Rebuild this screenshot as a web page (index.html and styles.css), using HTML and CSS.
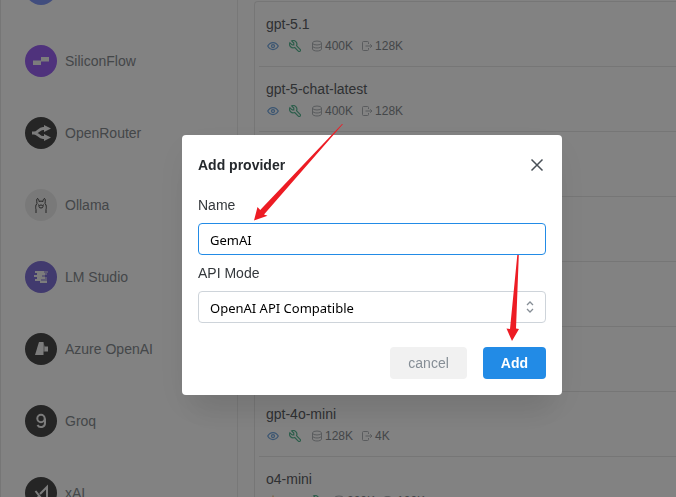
FILE: index.html
```
<!DOCTYPE html>
<html lang="en">
  <head>
    <meta charset="UTF-8" />
    <meta name="viewport" content="width=device-width, initial-scale=1.0" />
    <title>Providers</title>
    <link rel="stylesheet" href="styles.css">
  </head>
  <body>
    <!-- Shared icons -->
    <svg class="sprite" aria-hidden="true">
      <symbol id="icon-eye" viewBox="0 0 24 24">
        <path d="M1.500 12C4 7.300 7.500 5 12 5s8 2.300 10.500 7C20 16.700 16.500 19 12 19S4 16.700 1.500 12z" />
        <circle cx="12" cy="12" r="3" />
      </symbol>
      <symbol id="icon-tool" viewBox="2 2 20 20">
        <path d="M7 10h3V7L6.500 3.500a6 6 0 0 1 8 8l6 6a2 2 0 0 1-3 3l-6-6a6 6 0 0 1-8-8L7 10" />
      </symbol>
      <symbol id="icon-context" viewBox="0 0 24 24">
        <ellipse cx="12" cy="6" rx="9" ry="4" />
        <path d="M3 6v12c0 2.200 4 4 9 4s9-1.800 9-4V6M3 12c0 2.200 4 4 9 4s9-1.800 9-4" />
      </symbol>
      <symbol id="icon-output" viewBox="0 0 24 24">
        <path d="M15 8V5a2 2 0 0 0-2-2H5a2 2 0 0 0-2 2v14a2 2 0 0 0 2 2h8a2 2 0 0 0 2-2v-3M9 12h13M18.500 8.500L22 12l-3.500 3.500" />
      </symbol>
      <symbol id="icon-reason" viewBox="0 0 24 24">
        <path d="M12 1v3M3.500 5l2 2M20.500 5l-2 2M1 13h2M21 13h2M9 17a6 6 0 1 1 6 0v3H9z" />
      </symbol>
    </svg>

    <div class="app">
      <nav class="sidebar">
        <a class="provider" href="#" aria-label="DeepSeek">
          <span class="avatar avatar-blue"></span>
        </a>
        <a class="provider" href="#">
          <span class="avatar avatar-purple">
            <svg viewBox="0 0 32 32"><path d="M16 12h8v4.500h-8V20H8v-4.500h8z" /></svg>
          </span>
          SiliconFlow
        </a>
        <a class="provider" href="#">
          <span class="avatar">
            <svg viewBox="0 0 32 32">
              <path class="line heavy" d="M7 16h2c4 0 5-4.500 9-4.500h2M9 16c4 0 5 4.500 9 4.500h2" />
              <path d="M19 8l7 3.500-7 3.500zM19 17l7 3.500-7 3.500z" />
            </svg>
          </span>
          OpenRouter
        </a>
        <a class="provider" href="#">
          <span class="avatar avatar-light">
            <svg viewBox="0 0 32 32">
              <path class="line" d="M11 24v-3.500c-.4-1-.4-3 0-4.500l1-1.500c-.5-2.500-.3-5 .5-5s1.500 1.500 1.500 3c1-.5 3-.5 4 0 0-1.500.7-3 1.500-3s1 2.500.5 5l1 1.500c.4 1.500.4 3.500 0 4.500V24M13.500 15.500v1M18.500 15.500v1" />
              <ellipse class="line" cx="16" cy="17.500" rx="2" ry="1.500" />
            </svg>
          </span>
          Ollama
        </a>
        <a class="provider" href="#">
          <span class="avatar avatar-indigo">
            <svg viewBox="0 0 32 32">
              <path d="M10 10h9v2h-9zM12 12h8v2h-8zM9 14h8v2H9zM12 16h8v2h-8zM10 18h6v2h-6zM15 20h7v2h-7z" />
              <path class="faint" d="M19 10h4v2h-4zM20 12h2v2h-2zM17 14h3v2h-3zM20 16h2v2h-2zM16 18h6v2h-6z" />
            </svg>
          </span>
          LM Studio
        </a>
        <a class="provider" href="#">
          <span class="avatar">
            <svg viewBox="0 0 32 32">
              <path d="M14 9h4.500v13H10z" />
              <path d="M19.500 13.500H23v5h-3.500z" />
              <path class="faint" d="M18 9l2 4.500v5H18z" />
            </svg>
          </span>
          Azure OpenAI
        </a>
        <a class="provider" href="#">
          <span class="avatar">
            <svg viewBox="0 0 32 32">
              <path class="line" d="M20 13.500V18a4 4 0 0 1-7.500 2" />
              <circle class="line" cx="16" cy="13.500" r="3.700" />
            </svg>
          </span>
          Groq
        </a>
        <a class="provider" href="#">
          <span class="avatar">
            <svg viewBox="0 0 32 32">
              <path class="line" d="M10.500 14l7 9M11 23l3-4M15 17l7-7v13" />
            </svg>
          </span>
          xAI
        </a>
      </nav>

      <main class="content">
        <ul class="models">
          <li class="model">
            <span class="model-name">gpt-5.1</span>
            <span class="model-meta">
              <svg class="icon eye"><use href="#icon-eye" /></svg>
              <svg class="icon tool"><use href="#icon-tool" /></svg>
              <span class="limit"><svg class="icon"><use href="#icon-context" /></svg>400K</span>
              <span class="limit"><svg class="icon"><use href="#icon-output" /></svg>128K</span>
            </span>
          </li>
          <li class="model">
            <span class="model-name">gpt-5-chat-latest</span>
            <span class="model-meta">
              <svg class="icon eye"><use href="#icon-eye" /></svg>
              <svg class="icon tool"><use href="#icon-tool" /></svg>
              <span class="limit"><svg class="icon"><use href="#icon-context" /></svg>400K</span>
              <span class="limit"><svg class="icon"><use href="#icon-output" /></svg>128K</span>
            </span>
          </li>
          <li class="model"></li>
          <li class="model"></li>
          <li class="model"></li>
          <li class="model"></li>
          <li class="model">
            <span class="model-name">gpt-4o-mini</span>
            <span class="model-meta">
              <svg class="icon eye"><use href="#icon-eye" /></svg>
              <svg class="icon tool"><use href="#icon-tool" /></svg>
              <span class="limit"><svg class="icon"><use href="#icon-context" /></svg>128K</span>
              <span class="limit"><svg class="icon"><use href="#icon-output" /></svg>4K</span>
            </span>
          </li>
          <li class="model">
            <span class="model-name">o4-mini</span>
            <span class="model-meta">
              <svg class="icon reason"><use href="#icon-reason" /></svg>
              <svg class="icon eye"><use href="#icon-eye" /></svg>
              <svg class="icon tool"><use href="#icon-tool" /></svg>
              <span class="limit"><svg class="icon"><use href="#icon-context" /></svg>200K</span>
              <span class="limit"><svg class="icon"><use href="#icon-output" /></svg>100K</span>
            </span>
          </li>
        </ul>
      </main>
    </div>

    <div class="overlay">
      <form class="modal" role="dialog" aria-labelledby="modal-title">
        <header class="modal-header">
          <h2 id="modal-title">Add provider</h2>
          <button type="button" class="close" aria-label="Close">
            <svg viewBox="0 0 14 14"><path d="M1.500 1.500l11 11M12.500 1.500l-11 11" /></svg>
          </button>
        </header>

        <div class="form-group">
          <label for="name">Name</label>
          <input class="field active" type="text" id="name" value="GemAI" />
        </div>

        <div class="form-group">
          <label for="mode">API Mode</label>
          <div class="select-wrap">
            <select class="field" id="mode">
              <option>OpenAI API Compatible</option>
            </select>
            <svg class="chevrons" viewBox="0 0 8 12"><path d="M1 4l3-3 3 3M1 8l3 3 3-3" /></svg>
          </div>
        </div>

        <footer class="actions">
          <button type="button" class="btn btn-cancel">cancel</button>
          <button type="button" class="btn btn-add">Add</button>
        </footer>

        <svg class="arrows" viewBox="0 0 380 260" aria-hidden="true">
          <path d="M161-11L82 79.500l3.500 1.200L72 85.500l3.500-13.500 2.700 3L160-11z" />
          <path d="M335.300 120h1.500l-2.800 73.500 3 .5-7 12-5.500-12.500 3.500.5z" />
        </svg>
      </form>
    </div>
  </body>
</html>
```

FILE: styles.css
```
* {
  box-sizing: border-box;
}
body {
  background-color: #fff;
  color: #5c6064;
  font-family: "Liberation Sans", Arial, sans-serif;
  font-size: 14px;
  height: 100vh;
  margin: 0;
  overflow: hidden;
}
.sprite {
  display: none;
}
.app {
  border-left: 1px solid #e8e8e8;
  display: flex;
  height: 100vh;
  overflow: hidden;
}
.sidebar {
  border-right: 1px solid #ececec;
  display: flex;
  flex: 0 0 237px;
  flex-direction: column;
  justify-content: flex-end;
  margin-bottom: -32px;
  padding-left: 24px;
}
.provider {
  align-items: center;
  color: #868b90;
  display: flex;
  flex: 0 0 72px;
  gap: 8px;
  text-decoration: none;
}
.avatar {
  background-color: #4a4a4a;
  border-radius: 50%;
  color: #f4f4f4;
  height: 32px;
  width: 32px;
}
.avatar-blue {
  background-color: #8098f8;
}
.avatar-purple {
  background-color: #9b62f4;
}
.avatar-indigo {
  background-color: #8072d8;
}
.avatar-light {
  background-color: #eee;
  color: #484848;
}
.avatar svg {
  display: block;
  fill: currentColor;
}
.avatar .line {
  fill: none;
  stroke: currentColor;
  stroke-width: 2;
}
.avatar .heavy {
  stroke-width: 3;
}
.avatar-light .line {
  stroke-width: 1;
}
.avatar .faint {
  opacity: 0.5;
}
.content {
  flex: 1;
  padding: 1px 0 0 16px;
}
.models {
  border: 1px solid #e8e8e8;
  border-right: none;
  border-radius: 4px 0 0 0;
  list-style: none;
  margin: 0;
  padding: 0 0 0 4px;
}
.model {
  border-bottom: 1px solid #e8e8e8;
  display: flex;
  flex-direction: column;
  gap: 5px;
  height: 65px;
  padding: 12px 7px 0;
}
.model-name {
  line-height: 20px;
}
.model-meta {
  align-items: center;
  color: #868b90;
  display: flex;
  font-size: 12px;
  gap: 8px;
  line-height: 14px;
  padding-left: 1px;
}
.icon {
  fill: none;
  height: 12px;
  stroke: currentColor;
  stroke-width: 2;
  width: 12px;
}
.model-meta > .icon {
  margin-right: 2px;
}
.limit {
  align-items: center;
  display: flex;
  gap: 2px;
}
.limit .icon {
  color: #b0b4b8;
}
.eye {
  color: #74a8e0;
  stroke-width: 2.5;
}
.tool {
  color: #58b894;
}
.reason {
  color: #e8b060;
}
.overlay {
  align-items: center;
  background-color: rgba(0, 0, 0, 0.49);
  display: flex;
  inset: 0;
  justify-content: center;
  padding: 33px 0 0 68px;
  position: fixed;
}
.modal {
  background-color: #fff;
  border-radius: 4px;
  box-shadow: 0 28px 28px -12px rgba(0, 0, 0, 0.08), 0 12px 36px rgba(0, 0, 0, 0.06);
  color: #34383c;
  padding: 16px;
  position: relative;
  width: 380px;
}
.modal-header {
  align-items: center;
  display: flex;
  height: 28px;
  justify-content: space-between;
  margin-bottom: 16px;
}
.modal-header h2 {
  color: #25292d;
  font-size: 14px;
  margin: 0;
}
.close {
  background: none;
  border: none;
  height: 14px;
  margin-right: 2px;
  padding: 0;
  width: 14px;
}
.close svg {
  display: block;
  fill: none;
  stroke: #495057;
  stroke-width: 1.5;
}
.form-group {
  margin-bottom: 8px;
}
.form-group label {
  display: block;
  line-height: 20px;
  margin-bottom: 8px;
}
.field {
  appearance: none;
  background-color: #fff;
  border: 1px solid #ced4da;
  border-radius: 4px;
  color: #000;
  display: block;
  font-family: "Noto Sans", sans-serif;
  font-size: 13px;
  height: 32px;
  padding: 2px 11px 0;
  width: 100%;
}
.field.active {
  border-color: #228be6;
}
.field:focus {
  border-color: #228be6;
  outline: none;
}
.select-wrap {
  position: relative;
}
.chevrons {
  fill: none;
  height: 12px;
  pointer-events: none;
  position: absolute;
  right: 12px;
  stroke: #868e96;
  stroke-width: 1.3;
  top: 10px;
  width: 8px;
}
.actions {
  display: flex;
  gap: 16px;
  justify-content: flex-end;
  margin-top: 24px;
}
.btn {
  border: none;
  border-radius: 4px;
  font-family: inherit;
  font-size: 14px;
  height: 32px;
  padding: 0 18px;
}
.btn-cancel {
  background-color: #f1f1f1;
  color: #868e96;
}
.btn-add {
  background-color: #228be6;
  color: #fff;
  font-weight: bold;
}
.arrows {
  fill: #ed1c24;
  height: 260px;
  left: 0;
  overflow: visible;
  pointer-events: none;
  position: absolute;
  top: 0;
  width: 380px;
}
```
